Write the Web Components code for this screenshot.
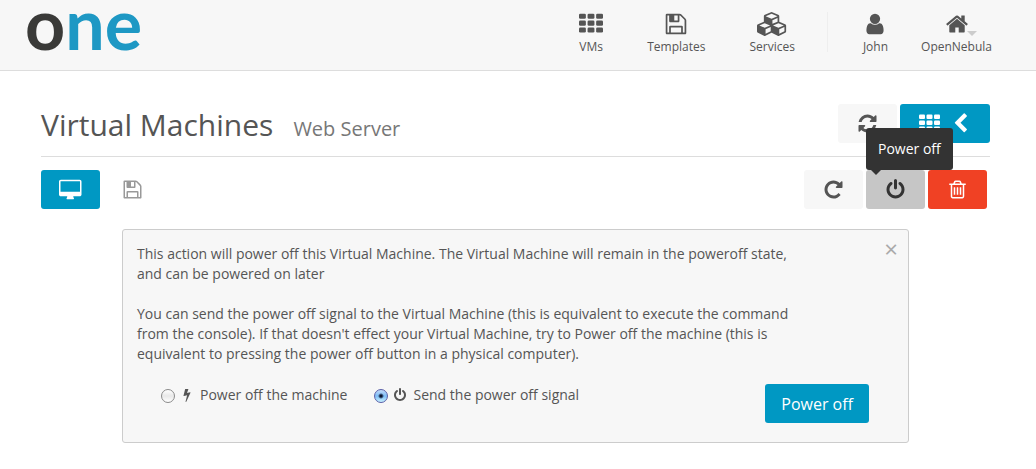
<!DOCTYPE html>
<html lang="en">
<head>
<meta charset="utf-8">
<title>OpenNebula - Virtual Machines</title>
<style>
  body { margin: 0; background: #fff; color: #555; font: 14px/20px "Open Sans", "Noto Sans", sans-serif; }
</style>
</head>
<body>
<cloud-app></cloud-app>
<script>
const define = (name, html, setup) => {
  const template = document.createElement('template');
  template.innerHTML = html;
  customElements.define(name, class extends HTMLElement {
    connectedCallback() {
      if (this.shadowRoot) return;
      this.attachShadow({ mode: 'open' }).append(template.content.cloneNode(true));
      if (setup) setup(this, this.shadowRoot);
    }
  });
};

// Icon name -> [viewBox, markup]
const th = [128, 640, 1152].map(y => [0, 640, 1280].map(x =>
  `<rect x="${x}" y="${y}" width="512" height="384" rx="96"/>`).join('')).join('');
const path = d => `<path d="${d}"/>`;
const box = '0 0 1792 1792';
const icons = {
  th: [box, th],
  floppy: [box, path('M512 1536h768v-384h-768v384zm896 0h128v-896q0-14-10-38.5t-20-34.5l-281-281q-10-10-34-20t-39-10v416q0 40-28 68t-68 28h-576q-40 0-68-28t-28-68v-416h-128v1280h128v-416q0-40 28-68t68-28h832q40 0 68 28t28 68v416zm-384-928v-320q0-13-9.5-22.5t-22.5-9.5h-192q-13 0-22.5 9.5t-9.5 22.5v320q0 13 9.5 22.5t22.5 9.5h192q13 0 22.5-9.5t9.5-22.5zm640 32v928q0 40-28 68t-68 28h-1344q-40 0-68-28t-28-68v-1344q0-40 28-68t68-28h928q40 0 88 20t76 48l280 280q28 28 48 76t20 88z')],
  cubes: ['0 0 2304 1792', path('M640 1632l384-192v-314l-384 164v342zm-64-454l404-173-404-173-404 173zm1088 454l384-192v-314l-384 164v342zm-64-454l404-173-404-173-404 173zm-448-293l384-165v-266l-384 164v267zm-64-379l441-189-441-189-441 189zm1088 518v416q0 36-19 67t-52 47l-448 224q-25 14-57 14t-57-14l-448-224q-4-2-7-4-2 2-7 4l-448 224q-25 14-57 14t-57-14l-448-224q-33-16-52-47t-19-67v-416q0-38 21.5-70t56.5-48l434-186v-400q0-38 21.5-70t56.5-48l448-192q23-10 50-10t50 10l448 192q35 16 56.5 48t21.5 70v400l434 186q36 16 57 48t21 70z')],
  user: [box, path('M1536 1399q0 109-62.5 187t-150.5 78h-854q-88 0-150.5-78t-62.5-187q0-85 8.5-160.5t31.5-152 58.5-131 94-89 134.5-34.5q131 128 313 128t313-128q76 0 134.5 34.5t94 89 58.5 131 31.5 152 8.5 160.5zm-256-887q0 159-112.5 271.5t-271.5 112.5-271.5-112.5-112.5-271.5 112.5-271.5 271.5-112.5 271.5 112.5 112.5 271.5z')],
  home: [box, path('M1472 992v480q0 26-19 45t-45 19h-384v-384h-256v384h-384q-26 0-45-19t-19-45v-480q0-1 .5-3t.5-3l575-474 575 474q1 2 1 6zm223-69l-62 74q-8 9-21 11h-3q-13 0-21-7l-692-577-692 577q-12 8-24 7-13-2-21-11l-62-74q-8-10-7-23.5t11-21.5l719-599q32-26 76-26t76 26l244 204v-195q0-14 9-23t23-9h192q14 0 23 9t9 23v408l219 182q10 8 11 21.5t-7 23.5z')],
  refresh: [box, path('M1639 1056q0 5-1 7-64 268-268 434.5t-478 166.5q-146 0-282.5-55t-243.5-157l-129 129q-19 19-45 19t-45-19-19-45v-448q0-26 19-45t45-19h448q26 0 45 19t19 45-19 45l-137 137q71 66 161 102t187 36q134 0 250-65t186-179q11-17 53-117 8-23 30-23h192q13 0 22.5 9.5t9.5 22.5zm25-800v448q0 26-19 45t-45 19h-448q-26 0-45-19t-19-45 19-45l138-138q-148-137-349-137-134 0-250 65t-186 179q-11 17-53 117-8 23-30 23h-199q-13 0-22.5-9.5t-9.5-22.5v-7q65-268 270-434.5t480-166.5q146 0 284 55.5t245 156.5l130-129q19-19 45-19t45 19 19 45z')],
  repeat: [box, path('M1664 256v448q0 26-19 45t-45 19h-448q-42 0-59-40-17-39 14-69l138-138q-148-137-349-137-104 0-198.5 40.5t-163.5 109.5-109.5 163.5-40.5 198.5 40.5 198.5 109.5 163.5 163.5 109.5 198.5 40.5q119 0 225-52t179-147q7-10 23-12 15 0 25 9l137 138q9 8 9.5 20.5t-7.5 22.5q-109 132-264 204.5t-327 72.5q-156 0-298-61t-245-164-164-245-61-298 61-298 164-245 245-164 298-61q147 0 284.5 55.5t244.5 156.5l130-129q29-31 70-14 39 17 39 59z')],
  power: [box, path('M1664 896q0 156-61 298t-164 245-245 164-298 61-298-61-245-164-164-245-61-298q0-182 80.5-343t226.5-270q43-32 95.5-25t83.5 50q32 42 24.5 94.5t-49.5 84.5q-98 74-151.5 181t-53.5 228q0 104 40.5 198.5t109.5 163.5 163.5 109.5 198.5 40.5 198.5-40.5 163.5-109.5 109.5-163.5 40.5-198.5q0-121-53.5-228t-151.5-181q-42-32-49.5-84.5t24.5-94.5q31-43 84-50t95 25q146 109 226.5 270t80.5 343zm-640-768v640q0 52-38 90t-90 38-90-38-38-90v-640q0-52 38-90t90-38 90 38 38 90z')],
  trash: [box, path('M704 736v576q0 14-9 23t-23 9h-64q-14 0-23-9t-9-23v-576q0-14 9-23t23-9h64q14 0 23 9t9 23zm256 0v576q0 14-9 23t-23 9h-64q-14 0-23-9t-9-23v-576q0-14 9-23t23-9h64q14 0 23 9t9 23zm256 0v576q0 14-9 23t-23 9h-64q-14 0-23-9t-9-23v-576q0-14 9-23t23-9h64q14 0 23 9t9 23zm128 724v-948h-896v948q0 22 7 40.5t14.5 27 10.5 8.5h832q3 0 10.5-8.5t14.5-27 7-40.5zm-672-1076h448l-48-117q-7-9-17-11h-317q-10 2-17 11zm928 32v64q0 14-9 23t-23 9h-96v948q0 83-47 143.5t-113 60.5h-832q-66 0-113-58.5t-47-141.5v-952h-96q-14 0-23-9t-9-23v-64q0-14 9-23t23-9h309l70-167q15-37 54-63t79-26h320q40 0 79 26t54 63l70 167h309q14 0 23 9t9 23z')],
  desktop: ['-64 -64 1920 1792', path('M1728 992v-832q0-13-9.5-22.5t-22.5-9.5h-1600q-13 0-22.5 9.5t-9.5 22.5v832q0 13 9.5 22.5t22.5 9.5h1600q13 0 22.5-9.5t9.5-22.5zm128-832v1088q0 66-47 113t-113 47h-544q0 37 16 77.5t32 71 16 43.5q0 26-19 45t-45 19h-512q-26 0-45-19t-19-45q0-14 16-44t32-70 16-78h-544q-66 0-113-47t-47-113v-1088q0-66 47-113t113-47h1600q66 0 113 47t47 113z')],
  chevron: [box, path('M1427 301l-531 531 531 531q19 19 19 45t-19 45l-166 166q-19 19-45 19t-45-19l-742-742q-19-19-19-45t19-45l742-742q19-19 45-19t45 19l166 166q19 19 19 45t-19 45z')],
  bolt: [box, path('M1333 566q18 20 7 44l-540 1157q-13 25-42 25-4 0-14-2-17-5-25.5-19t-4.5-30l197-808-406 101q-4 1-12 1-18 0-31-11-18-15-13-39l201-825q4-14 16-23t28-9h328q19 0 32 12.5t13 29.5q0 8-5 18l-171 463 396-98q8-2 12-2 19 0 34 15z')],
};

define('cloud-icon', `
<style>
  :host { display: block; height: var(--size, 21px); flex: none; }
  svg { display: block; height: 100%; fill: currentColor; }
</style>
<svg aria-hidden="true"></svg>`, (host, root) => {
  const [view, markup] = icons[host.getAttribute('name')];
  const svg = root.querySelector('svg');
  svg.setAttribute('viewBox', view);
  svg.innerHTML = markup;
});

define('cloud-logo', `
<style>
  :host { display: block; }
  a { display: block; color: #1e98c4; text-decoration: none; font: 700 70px/46px Lato, sans-serif; }
  span { color: #3a3a38; }
</style>
<a href="#home"><span>o</span>ne</a>`);

define('cloud-nav-item', `
<style>
  :host { display: block; }
  a { display: flex; flex-direction: column; align-items: center; color: #555; text-decoration: none; font-size: 12px; line-height: 16px; gap: 3px; }
  .icon { position: relative; --size: 24px; }
  .caret { display: none; position: absolute; left: 22px; bottom: 0; border: 5px solid transparent; border-top-color: #ccc; border-bottom: 0; }
  :host([menu]) .caret { display: block; }
</style>
<a href="#"><span class="icon"><slot name="icon"></slot><i class="caret"></i></span><span><slot></slot></span></a>`);

define('cloud-header', `
<style>
  :host { display: flex; justify-content: space-between; align-items: flex-start; height: 70px; padding: 0 44px 0 25px; background: #f7f7f7; border-bottom: 1px solid #ddd; }
  nav { display: flex; gap: 44px; padding-top: 12px; }
  .account { display: flex; gap: 33px; padding-left: 35px; margin-left: -12px; height: 40px; border-left: 1px solid #eee; }
</style>
<cloud-logo></cloud-logo>
<nav aria-label="Main">
  <cloud-nav-item><cloud-icon slot="icon" name="th"></cloud-icon>VMs</cloud-nav-item>
  <cloud-nav-item><cloud-icon slot="icon" name="floppy"></cloud-icon>Templates</cloud-nav-item>
  <cloud-nav-item><cloud-icon slot="icon" name="cubes"></cloud-icon>Services</cloud-nav-item>
  <div class="account">
    <cloud-nav-item><cloud-icon slot="icon" name="user"></cloud-icon>John</cloud-nav-item>
    <cloud-nav-item menu><cloud-icon slot="icon" name="home"></cloud-icon>OpenNebula</cloud-nav-item>
  </div>
</nav>`);

define('cloud-button', `
<style>
  :host { display: block; position: relative; }
  button { display: flex; align-items: center; justify-content: center; gap: 10px; box-sizing: border-box; min-width: 59px; height: 39px; margin: 0; padding: 0 16px; border: 0; border-radius: 3px; background: #f7f7f7; color: #555; font: inherit; font-size: 16px; white-space: nowrap; cursor: pointer; }
  :host([wide]) button { padding: 0 19px; }
  :host([kind=primary]) button { background: #0098c3; color: #fff; }
  :host([kind=danger]) button { background: #f04124; color: #fff; }
  :host([kind=active]) button { background: #c6c6c6; color: #333; }
  :host([kind=plain]) button { background: none; color: #999; }
</style>
<button type="button"><slot></slot></button>
<slot name="tip"></slot>`, (host, root) => {
  const label = host.getAttribute('label');
  if (label) root.querySelector('button').setAttribute('aria-label', label);
});

define('cloud-tooltip', `
<style>
  :host { display: block; position: absolute; z-index: 2; left: 0; bottom: 100%; padding: 11px 12px; border-radius: 3px; background: #333; color: #fff; white-space: nowrap; }
  i { position: absolute; left: 5px; top: 100%; border: 5px solid transparent; border-top-color: #333; border-bottom: 0; }
</style>
<slot></slot><i></i>`);

define('cloud-title-bar', `
<style>
  :host { display: flex; align-items: flex-start; gap: 3px; height: 52px; border-bottom: 1px solid #ddd; }
  .titles { display: flex; align-items: baseline; gap: 20px; flex: 1; }
  h1, h2 { margin: 0; font-weight: 400; line-height: 42px; white-space: nowrap; }
  h1 { font-size: 30px; }
  h2 { font-size: 20px; color: #777; }
</style>
<div class="titles"><h1>Virtual Machines</h1><h2>Web Server</h2></div>
<cloud-button label="Refresh"><cloud-icon name="refresh"></cloud-icon></cloud-button>
<cloud-button kind="primary" wide label="Back to list"><cloud-icon name="th"></cloud-icon><cloud-icon name="chevron"></cloud-icon></cloud-button>`);

define('cloud-toolbar', `
<style>
  :host { display: flex; gap: 3px; padding-right: 3px; }
  .space { flex: 1; }
</style>
<cloud-button kind="primary" label="Open console"><cloud-icon name="desktop"></cloud-icon></cloud-button>
<cloud-button kind="plain" label="Save"><cloud-icon name="floppy"></cloud-icon></cloud-button>
<div class="space"></div>
<cloud-button label="Reboot"><cloud-icon name="repeat"></cloud-icon></cloud-button>
<cloud-button kind="active" label="Power off"><cloud-icon name="power"></cloud-icon><cloud-tooltip slot="tip">Power off</cloud-tooltip></cloud-button>
<cloud-button kind="danger" label="Delete"><cloud-icon name="trash"></cloud-icon></cloud-button>`);

define('cloud-confirm', `
<style>
  :host { display: block; position: relative; padding: 14px 39px 19px 14px; border: 1px solid #ccc; border-radius: 3px; background: #f7f7f7; }
  p { margin: 0 64px 20px 0; }
  form { display: flex; align-items: flex-start; justify-content: space-between; margin: 0; }
  .options { display: flex; gap: 27px; padding-left: 24px; }
  label { display: flex; align-items: center; line-height: 22px; --size: 14px; }
  label cloud-icon { margin: 0 6px 0 5px; }
  input { appearance: none; box-sizing: border-box; width: 14px; height: 14px; margin: 2px 0 0; border: 1px solid #8a8a8a; border-radius: 50%; background: linear-gradient(#fff, #e8e8e8 50%, #fff); }
  input:checked { border-color: #5a5fa8; background: radial-gradient(circle, #0a1430 0 1px, transparent 3px), linear-gradient(#c4dcfa, #7cbcf6 50%, #c8f2ff); }
  .close { position: absolute; top: 9px; right: 10px; width: 14px; height: 20px; padding: 0; border: 0; background: none; color: #aaa; font: inherit; font-size: 24px; line-height: 20px; cursor: pointer; }
</style>
<p>This action will power off this Virtual Machine. The Virtual Machine will remain in the poweroff state, and can be powered on later</p>
<p>You can send the power off signal to the Virtual Machine (this is equivalent to execute the command from the console). If that doesn't effect your Virtual Machine, try to Power off the machine (this is equivalent to pressing the power off button in a physical computer).</p>
<form>
  <div class="options">
    <label><input type="radio" name="mode" value="hard"><cloud-icon name="bolt"></cloud-icon>Power off the machine</label>
    <label><input type="radio" name="mode" value="signal" checked><cloud-icon name="power"></cloud-icon>Send the power off signal</label>
  </div>
  <cloud-button kind="primary">Power off</cloud-button>
</form>
<button class="close" type="button" aria-label="Close">×</button>`);

define('cloud-app', `
<style>
  :host { display: block; }
  main { display: block; padding: 33px 46px 26px 41px; }
  cloud-toolbar { margin: 13px 0 20px; }
  cloud-confirm { margin: 0 81px; }
</style>
<cloud-header></cloud-header>
<main>
  <cloud-title-bar></cloud-title-bar>
  <cloud-toolbar></cloud-toolbar>
  <cloud-confirm></cloud-confirm>
</main>`);
</script>
</body>
</html>
